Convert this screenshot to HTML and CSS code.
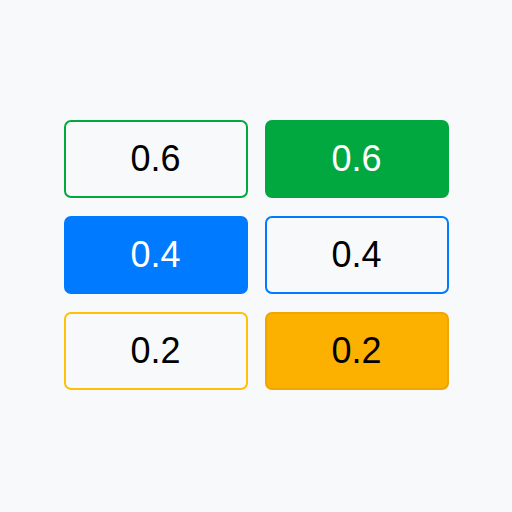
FILE: index.html
```html
<!DOCTYPE html>
<html>
<head>
<meta charset="utf-8">
<link rel="stylesheet" href="styles.css">
</head>
<body>
<div class="grid">
  <div class="btn outline-green">0.6</div>
  <div class="btn solid-green">0.6</div>
  <div class="btn solid-blue">0.4</div>
  <div class="btn outline-blue">0.4</div>
  <div class="btn outline-yellow">0.2</div>
  <div class="btn solid-yellow">0.2</div>
</div>
</body>
</html>
```
FILE: styles.css
```css
html, body {
  margin: 0;
  padding: 0;
  background: #f8f9fa;
  width: 512px;
  height: 512px;
}
body {
  display: flex;
  align-items: center;
  justify-content: center;
  font-family: "Liberation Sans", Arial, sans-serif;
}
.grid {
  display: grid;
  grid-template-columns: 184px 184px;
  grid-auto-rows: 78px;
  column-gap: 17px;
  row-gap: 18px;
  margin-top: -2px;
}
.btn {
  box-sizing: border-box;
  border: 2px solid transparent;
  border-radius: 7px;
  display: flex;
  align-items: center;
  justify-content: center;
  font-size: 36px;
  color: #000;
}
.outline-green { border-color: #00a83f; }
.solid-green { background: #00a83f; border-color: #00a83f; color: #fff; }
.solid-blue { background: #007bff; border-color: #007bff; color: #fff; }
.outline-blue { border-color: #007bff; }
.outline-yellow { border-color: #ffc107; }
.solid-yellow { background: #fcb000; border-color: #f0a500; }
```
